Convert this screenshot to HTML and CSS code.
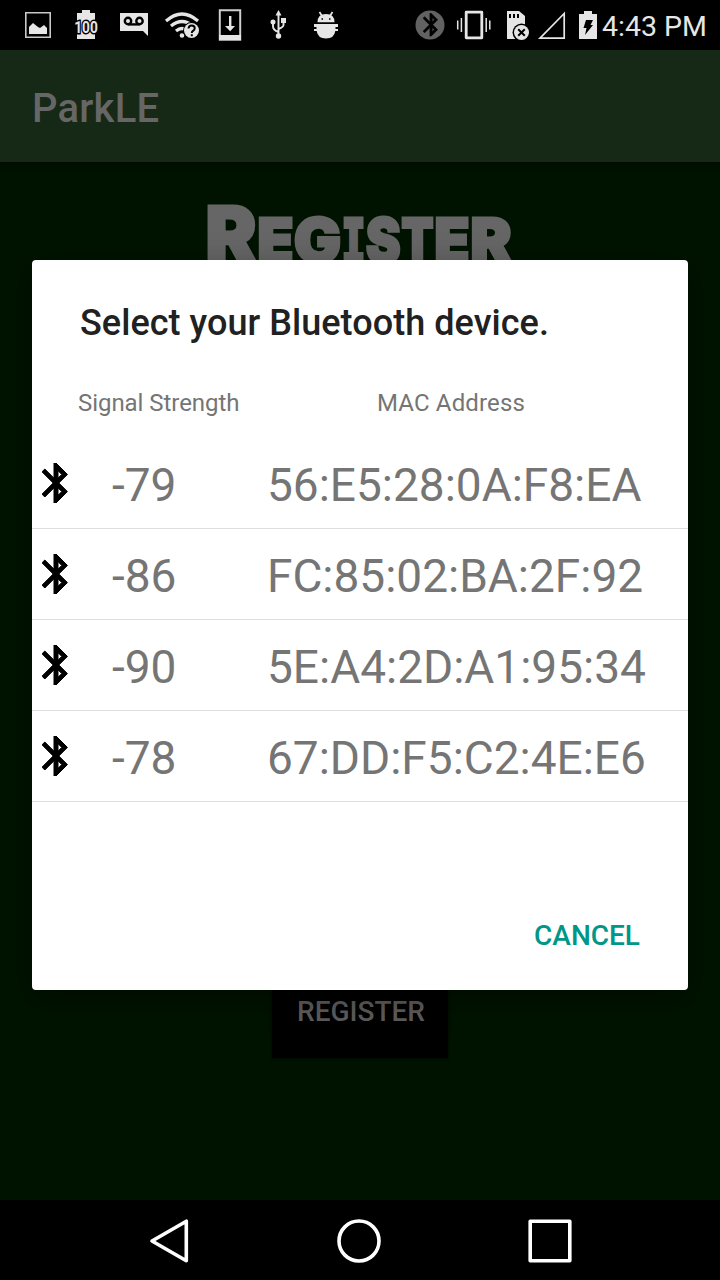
FILE: index.html
```html
<!DOCTYPE html>
<html lang="en">
<head>
<meta charset="utf-8">
<title>ParkLE</title>
<link rel="stylesheet" href="styles.css">
</head>
<body>
<svg class="defs" width="0" height="0">
  <symbol id="bt" viewBox="5 2 13 20">
    <path d="M17.710 7.710L12 2h-1v7.590L6.410 5 5 6.410 10.590 12 5 17.590 6.410 19 11 14.410V22h1l5.710-5.710-4.300-4.290zM13 5.830l1.880 1.880L13 9.590zM14.880 16.290L13 18.170v-3.760z" fill="currentColor" stroke="currentColor" stroke-width=".5"/>
  </symbol>
</svg>
<div class="screen">
  <header class="status">
    <div class="notices">
      <svg viewBox="0 0 48 50"><path d="M11.8 12.8h24.4v24.400H11.800z" fill="none" stroke="#c8c8c8" stroke-width="1.600"/><path d="M15 34v-7l4-4 5 4 2 1 4-3 3 3v6z"/></svg>
      <svg viewBox="0 0 48 50"><path d="M20 10h8v3h5v8H15v-8h5zM15 21h18v18H15z"/><text x="24" y="33" class="charge" textLength="23.500" lengthAdjust="spacingAndGlyphs">100</text></svg>
      <svg viewBox="0 0 48 50"><path d="M10 13h28v23l-5-5H10z"/><g fill="none" stroke="#000" stroke-width="2.400"><circle cx="18" cy="21" r="3.200"/><circle cx="29.500" cy="21" r="3.200"/><path d="M18 24.400h11.500"/></g></svg>
      <svg viewBox="0 0 48 50"><g fill="none" stroke="#e6e6e6" stroke-width="3.200"><path d="M8 21q16-14 32 0M13 26q11-9 22 0M18 31q6-5 12 0"/></g><circle cx="24" cy="35.500" r="2.300"/><circle cx="33.500" cy="30.500" r="8.500" fill="#000"/><circle cx="33.500" cy="30.500" r="7.500"/><path d="M30.500 28.500q.3-3 3.200-3 3 0 3 2.700 0 1.500-1.700 2.600-1.200.8-1.200 2.200M33.800 34.200v2" fill="none" stroke="#000" stroke-width="2"/></svg>
      <svg viewBox="0 0 48 50"><path d="M13.800 10.200h20.400v29.600H13.800z" fill="none" stroke="#cfcfcf" stroke-width="2"/><path d="M13 35h22v5H13zM23 16h2.400v10H29l-4.800 5.200L19 26h4z"/></svg>
      <svg viewBox="0 0 48 50"><path d="M24.500 10l3 5.500h-6zM27 18h5v5h-5zM21.800 36a2.700 2.700 0 1 0 5.400 0 2.700 2.700 0 1 0-5.400 0zM16.500 22a2.500 2.500 0 1 0 5 0 2.500 2.500 0 1 0-5 0z"/><path d="M24.500 14v22M19 23v3.500q0 3.500 5.500 5.500M29.500 22v3q0 2-5 4" fill="none" stroke="#e6e6e6" stroke-width="1.900"/></svg>
      <svg viewBox="0 0 48 50"><path d="M15.500 22.300q0-8.300 8.500-8.300t8.500 8.300zM12 24h24v3h-2.500v2H36v2h-2.700q-1 7.500-9.300 7.500T14.700 31H12v-2h2.500v-2H12z"/><path d="M17.500 12l2.500 4M30.500 12l-2.500 4" stroke="#e6e6e6" stroke-width="1.700"/><path d="M19.500 19H21M27 19h1.500" stroke="#000" stroke-width="1.500"/></svg>
    </div>
    <div class="system">
      <svg class="w30" viewBox="0 0 30 50"><circle cx="15" cy="25" r="14.500" fill="#626262"/><use class="bt-off" href="#bt" x="8" y="13" width="15" height="23.500"/></svg>
      <svg class="w36" viewBox="0 0 36 50"><path d="M10.200 12.200h15.600v25.600H10.200z" fill="none" stroke="#e6e6e6" stroke-width="2.800" stroke-linejoin="round"/><path d="M1.700 20.500v9M5.400 18v14M30.200 18v14M33.800 20.500v9" stroke="#e6e6e6" stroke-width="1.500"/></svg>
      <svg class="w26" viewBox="0 0 26 50"><path d="M1 11h12l6 5v23H1z"/><path d="M4 14v4M8 14v4M12 14v4" stroke="#000" stroke-width="2"/><circle cx="15.500" cy="32.500" r="9" fill="#000"/><circle cx="15.500" cy="32.500" r="7.500"/><path d="M12.200 29.200l6.600 6.600m0-6.600l-6.600 6.600" stroke="#000" stroke-width="2"/></svg>
      <svg class="w30" viewBox="0 0 30 50"><path d="M3 38.200h24.200V13.500z" fill="none" stroke="#e6e6e6" stroke-width="1.700"/></svg>
      <svg class="w18" viewBox="0 0 18 50"><path d="M5 11h8v3h5v25H0V14h5z"/><path d="M7 20h7l-2.500 5H14L6 35l1.500-7H4.500z" fill="#000"/></svg>
      <time class="clock">4:43 PM</time>
    </div>
  </header>
  <div class="appbar">ParkLE</div>
  <main class="page">
    <svg class="heading" viewBox="0 0 320 70" role="heading" aria-label="Register">
      <text y="62"><tspan class="cap" x="5.500" textLength="51" lengthAdjust="spacingAndGlyphs">R</tspan><tspan x="57.500" textLength="36" lengthAdjust="spacingAndGlyphs">E</tspan><tspan x="94" textLength="47" lengthAdjust="spacingAndGlyphs">G</tspan><tspan class="slab" x="142" textLength="23" lengthAdjust="spacingAndGlyphs">I</tspan><tspan x="166" textLength="34.500" lengthAdjust="spacingAndGlyphs">S</tspan><tspan x="201.500" textLength="32" lengthAdjust="spacingAndGlyphs">T</tspan><tspan x="234.500" textLength="35" lengthAdjust="spacingAndGlyphs">E</tspan><tspan x="270.500" textLength="41" lengthAdjust="spacingAndGlyphs">R</tspan></text>
    </svg>
    <div class="submit">REGISTER</div>
  </main>
  <nav class="nav">
    <svg viewBox="0 0 460 80"><g fill="none" stroke="#fff" stroke-width="3.600" stroke-linejoin="round"><path d="M22 41 56.300 21.200v39.600z"/><circle cx="229" cy="41" r="20"/><path d="M400.200 21.200h39.600v39.600h-39.600z"/></g></svg>
  </nav>
  <section class="dialog">
    <h1 class="title">Select your Bluetooth device.</h1>
    <div class="columns"><span class="col-signal">Signal Strength</span><span class="col-mac">MAC Address</span></div>
    <ul class="devices">
      <li class="device"><svg class="bt"><use href="#bt"/></svg><span class="rssi">-79</span><span class="mac">56:E5:28:0A:F8:EA</span></li>
      <li class="device"><svg class="bt"><use href="#bt"/></svg><span class="rssi">-86</span><span class="mac">FC:85:02:BA:2F:92</span></li>
      <li class="device"><svg class="bt"><use href="#bt"/></svg><span class="rssi">-90</span><span class="mac">5E:A4:2D:A1:95:34</span></li>
      <li class="device"><svg class="bt"><use href="#bt"/></svg><span class="rssi">-78</span><span class="mac">67:DD:F5:C2:4E:E6</span></li>
    </ul>
    <div class="actions"><span class="cancel">CANCEL</span></div>
  </section>
</div>
</body>
</html>
```
FILE: styles.css
```css
* { box-sizing: border-box; }
body { margin: 0; background: #000; font-family: Roboto, sans-serif; }
svg { display: block; flex: none; }
.defs { position: absolute; }
.screen { position: relative; width: 720px; height: 1280px; display: flex; flex-direction: column; overflow: hidden; }

.status { height: 50px; display: flex; justify-content: space-between; padding-left: 14px; padding-right: 13px; background: #000; color: #e6e6e6; fill: #e6e6e6; }
.notices { display: flex; }
.notices svg { width: 48px; height: 50px; }
.charge { font-size: 16.500px; font-weight: 700; text-anchor: middle; stroke: #000; stroke-width: 3px; paint-order: stroke; }
.system { display: flex; width: 292px; }
.system svg { height: 50px; }
.bt-off { color: #000; }
.w30 { width: 30px; }
.w36 { width: 36px; margin-left: 11px; margin-right: 14px; }
.w26 { width: 26px; margin-right: 5px; }
.w18 { width: 18px; margin-left: 12px; margin-right: 5px; }
.clock { font-size: 28.500px; line-height: 53px; white-space: nowrap; }

.appbar { height: 112px; padding-left: 32px; background: #152916; color: #666; font-size: 40px; font-weight: 500; line-height: 118px; letter-spacing: .2px; }
.page { flex: 1; display: flex; flex-direction: column; align-items: center; justify-content: space-between; padding: 38px 0 142px; background: linear-gradient(#000d00, #001300 10px); }
.heading { width: 320px; height: 70px; overflow: visible; fill: #666; stroke: #666; stroke-width: 3px; font-family: Inter, sans-serif; font-size: 60px; font-weight: 900; }
.heading .cap { font-size: 76.500px; }
.heading .slab { font-family: "DejaVu Sans Mono", monospace; font-weight: 700; stroke-width: 5px; font-size: 58px; }
.submit { width: 176px; height: 96px; padding-left: 2px; background: #000; color: #5c5c5c; font-size: 28px; font-weight: 500; line-height: 100px; text-align: center; box-shadow: 0 1px 3px #000a00; }
.nav { height: 80px; padding-left: 130px; background: #000; }
.nav svg { width: 460px; height: 80px; }

.dialog { position: absolute; left: 32px; top: 260px; width: 656px; height: 730px; display: flex; flex-direction: column; background: #fff; border-radius: 4px; box-shadow: 0 8px 32px rgba(0, 0, 0, .35); }
.title { margin: 0; padding: 38px 48px 0; color: #212121; font-size: 36px; font-weight: 500; line-height: 50px; letter-spacing: .04px; white-space: nowrap; }
.columns { display: flex; padding: 39px 0 0 46px; color: #757575; font-size: 24px; line-height: 32px; }
.col-signal { width: 299px; letter-spacing: -.05px; }
.col-mac { letter-spacing: .15px; }
.devices { margin: 19px 0 0; padding: 0; list-style: none; }
.device { display: flex; height: 91px; padding-left: 10px; border-bottom: 1px solid #dedede; color: #757575; font-size: 46px; line-height: 95px; white-space: nowrap; }
.bt { width: 26px; height: 40px; margin-top: 25px; color: #000; }
.rssi { width: 156px; margin-left: 43px; padding-left: 1px; }
.actions { margin-top: auto; display: flex; justify-content: flex-end; padding: 0 48px 30px; }
.cancel { color: #009688; font-size: 28px; font-weight: 500; line-height: 48px; }
```
